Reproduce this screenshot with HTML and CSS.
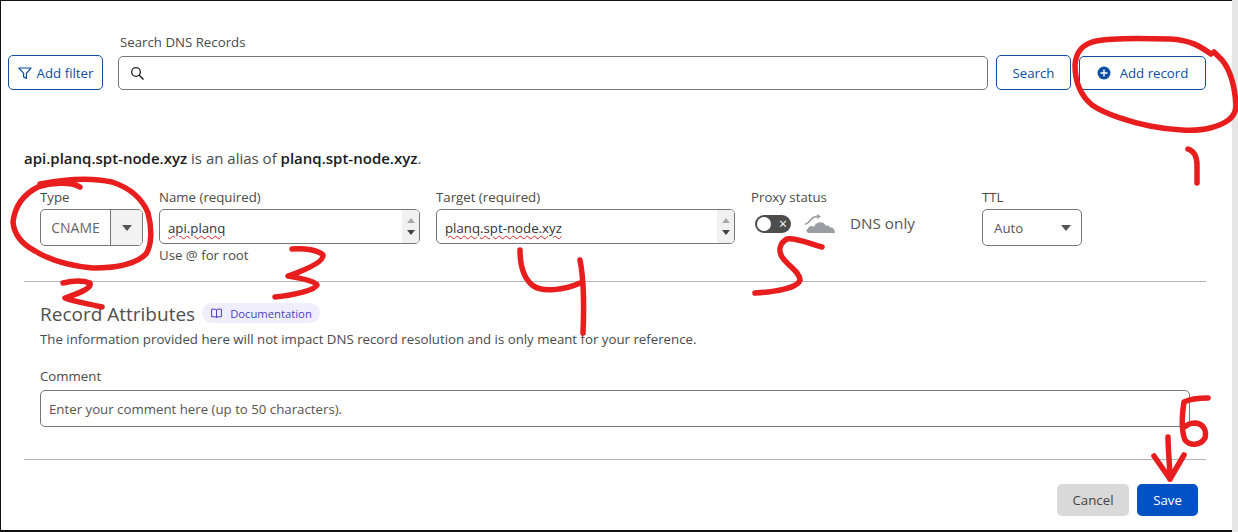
FILE: index.html
```html
<!DOCTYPE html>
<html lang="en">
<head>
  <meta charset="UTF-8" />
  <title>DNS Records</title>
  <link rel="stylesheet" href="styles.css">
</head>
<body>
  <div class="page">
    <div class="search-row">
      <button class="btn btn-outline btn-filter">
        <svg width="14" height="14" viewBox="0 0 14 14"><path d="M1 2h12L8.400 7.400v5L5.600 11V7.400z" fill="none" stroke="#0b4ea2" stroke-width="1.200" stroke-linejoin="round"/></svg>
        Add filter
      </button>
      <div class="search-field">
        <label class="label">Search DNS Records</label>
        <div class="search-box">
          <svg width="15" height="15" viewBox="0 0 15 15"><circle cx="6" cy="6" r="4.300" fill="none" stroke="#222" stroke-width="1.300"/><path d="M9.200 9.200L13.500 13.500" stroke="#222" stroke-width="1.500"/></svg>
        </div>
      </div>
      <button class="btn btn-outline btn-search">Search</button>
      <button class="btn btn-outline btn-add">
        <svg width="14" height="14" viewBox="0 0 14 14"><circle cx="7" cy="7" r="6.500" fill="#0b4ea2"/><path d="M7 3.500v7M3.500 7h7" stroke="#fff" stroke-width="1.400"/></svg>
        Add record
      </button>
    </div>

    <p class="alias"><strong>api.planq.spt-node.xyz</strong> is an alias of <strong>planq.spt-node.xyz</strong>.</p>

    <div class="record-row">
      <div class="col col-type">
        <label class="label">Type</label>
        <div class="select">
          <span class="select-value">CNAME</span>
          <span class="select-arrow"><i class="caret"></i></span>
        </div>
      </div>
      <div class="col col-name">
        <label class="label">Name (required)</label>
        <div class="text-box">
          <span class="typed">api.planq</span>
          <span class="spinner"><i class="up"></i><i class="down"></i></span>
        </div>
        <span class="hint">Use @ for root</span>
      </div>
      <div class="col col-target">
        <label class="label">Target (required)</label>
        <div class="text-box">
          <span class="typed">planq.spt-node.xyz</span>
          <span class="spinner"><i class="up"></i><i class="down"></i></span>
        </div>
      </div>
      <div class="col col-proxy">
        <label class="label">Proxy status</label>
        <div class="proxy">
          <span class="toggle"><i class="knob"></i><span class="toggle-x">×</span></span>
          <svg class="cloud" width="32" height="22" viewBox="0 0 32 22">
            <path d="M1 11.500C4 10.500 5.500 8.500 7 6.500C8.500 4.500 10 3.500 13 3.500" fill="none" stroke="#9a9ea2" stroke-width="1.600"/>
            <path d="M13 1l4 2.500-4 2.500z" fill="#9a9ea2"/>
            <path d="M5 20c-2.500 0-3.500-3.500-1-4.500 1-3 4.500-3 6-1.500 1.500-5 9-7 12-1 1-1 3.500-.5 4 1.500 3-.5 5 2 5 5.500z" fill="#9a9ea2"/>
          </svg>
          <span class="proxy-text">DNS only</span>
        </div>
      </div>
      <div class="col col-ttl">
        <label class="label">TTL</label>
        <div class="ttl-select">Auto<i class="caret"></i></div>
      </div>
    </div>

    <hr class="rule rule-first">

    <div class="attributes">
      <div class="attributes-head">
        <h2>Record Attributes</h2>
        <span class="pill">
          <svg width="11" height="11" viewBox="0 0 11 11"><path d="M.6 1.200h3.600c.7 0 1.300.4 1.300 1.100v7.500c0-.6-.6-1-1.300-1H.6zM10.400 1.200H6.800c-.7 0-1.300.4-1.300 1.100v7.500c0-.6.600-1 1.300-1h3.600z" fill="none" stroke="#4b3fc4" stroke-width="1"/></svg>
          Documentation
        </span>
      </div>
      <p class="note">The information provided here will not impact DNS record resolution and is only meant for your reference.</p>
      <label class="label label-comment">Comment</label>
      <input class="comment" type="text" placeholder="Enter your comment here (up to 50 characters).">
    </div>

    <hr class="rule rule-second">

    <div class="actions">
      <button class="btn btn-cancel">Cancel</button>
      <button class="btn btn-save">Save</button>
    </div>

    <!-- red pen marks on top of the screenshot -->
    <svg class="pen" width="1238" height="532" viewBox="0 0 1238 532">
      <path d="M1211 54C1200 46 1190 40 1170 39C1140 38 1110 38 1096 41C1082 44 1076 52 1075 65C1075 82 1080 95 1092 105C1105 114 1130 122 1150 126C1170 130 1195 132 1210 128C1225 124 1236 118 1236 105C1235 90 1232 72 1222 60L1214 52"/>
      <path d="M1188 149C1194 151 1197 156 1197 165L1197 183"/>
      <path d="M80 187C70 181 50 183 38 187C24 194 15 205 13 222C14 235 22 244 35 251C50 260 70 266 93 268C115 268 135 265 146 254C152 245 152 228 148 213C142 198 130 188 112 182C90 177 65 179 40 184"/>
      <path d="M63 283C72 281 82 280 90 283C92 288 80 293 65 298C75 302 90 304 102 307"/>
      <path d="M292 249C305 248 318 250 323 255C324 262 305 270 288 276C300 278 315 281 317 285C315 290 295 295 275 297"/>
      <path d="M520 250C520 265 524 278 532 285C542 293 565 290 580 283"/>
      <path d="M580 260C584 280 584 310 583 333"/>
      <path d="M822 247C810 244 795 237 787 239C780 243 778 250 782 257C788 266 800 272 800 280C798 288 775 292 755 293"/>
      <path d="M1208 398C1200 398 1190 399 1184 402C1182 415 1181 430 1185 440C1190 446 1200 446 1205 438C1207 430 1203 424 1196 423C1192 423 1188 424 1186 426"/>
      <path d="M1168 437C1168 450 1170 468 1170 479"/>
      <path d="M1154 456L1170 479L1184 455"/>
    </svg>
  </div>
</body>
</html>
```

FILE: styles.css
```css
/* Global Styling */
* {
  box-sizing: border-box;
}

body {
  margin: 0;
  background: #e6e6e6;
  font-family: "Open Sans", "Noto Sans", Arial, sans-serif;
  font-size: 13.25px;
  color: #4a4a4a;
}

.page {
  position: relative;
  width: 1232px;
  height: 532px;
  overflow: visible;
  background: #fff;
  border-top: 1px solid #111;
  border-left: 1px solid #111;
  border-bottom: 2px solid #111;
}

.pen {
  position: absolute;
  top: -1px;
  left: -1px;
  pointer-events: none;
}

.pen path {
  fill: none;
  stroke: #e81e1e;
  stroke-width: 5.5;
  stroke-linecap: round;
  stroke-linejoin: round;
}

.label {
  display: block;
  line-height: 16px;
  color: #4a4a4a;
}

/* Buttons */
.btn {
  font: inherit;
  border-radius: 5px;
  cursor: pointer;
}

.btn-outline {
  display: flex;
  align-items: center;
  justify-content: center;
  height: 35px;
  background: #fff;
  border: 1px solid #0b4ea2;
  color: #0b4ea2;
}

/* Search Row */
.search-row {
  display: flex;
  align-items: flex-end;
  padding: 33px 0 0 7px;
}

.btn-filter {
  width: 95px;
  gap: 5px;
  padding: 0;
}

.search-field {
  margin-left: 15px;
  width: 870px;
}

.search-field .label {
  margin: 0 0 6px 2px;
}

.search-box {
  display: flex;
  align-items: center;
  height: 34px;
  padding-left: 11px;
  border: 1px solid #767676;
  border-radius: 5px;
}

.btn-search {
  width: 75px;
  margin-left: 8px;
}

.btn-add {
  width: 127px;
  margin-left: 8px;
  gap: 9px;
  height: 34px;
}

.alias {
  margin: 58px 0 0 23px;
  font-size: 15px;
  line-height: 20px;
}

.alias strong {
  font-weight: 600;
  color: #1a1a1a;
}

/* Record Row */
.record-row {
  display: flex;
  margin: 21px 0 0 39px;
  height: 85px;
}

.col .label {
  margin-bottom: 4px;
}

.col-type {
  width: 103px;
}

.col-name {
  width: 261px;
  margin-left: 16px;
}

.col-target {
  width: 299px;
  margin-left: 16px;
}

.col-proxy {
  width: 231px;
  margin-left: 16px;
}

.col-ttl {
  width: 100px;
}

.select {
  display: flex;
  height: 37px;
  border: 1px solid #767676;
  border-radius: 5px;
  overflow: hidden;
}

.select-value {
  flex: 1;
  display: flex;
  align-items: center;
  justify-content: center;
  font-size: 14px;
  color: #666;
}

.select-arrow {
  display: flex;
  align-items: center;
  justify-content: center;
  width: 32px;
  background: #f2f2f2;
  border-left: 1px solid #767676;
}

.caret {
  width: 0;
  height: 0;
  border-left: 5px solid transparent;
  border-right: 5px solid transparent;
  border-top: 6px solid #555;
}

.text-box {
  display: flex;
  align-items: center;
  justify-content: space-between;
  height: 35px;
  padding-left: 8px;
  border: 1px solid #767676;
  border-radius: 5px;
  overflow: hidden;
}

.typed {
  padding-top: 3px;
  color: #333;
  text-decoration: underline wavy #e02020 1px;
  text-underline-offset: 2px;
}

.spinner {
  display: flex;
  flex-direction: column;
  justify-content: space-around;
  align-items: center;
  width: 17px;
  height: 100%;
  padding: 5px 0;
  background: #f1f1f1;
}

.spinner .up {
  border-left: 4px solid transparent;
  border-right: 4px solid transparent;
  border-bottom: 5px solid #a9a9a9;
}

.spinner .down {
  border-left: 4px solid transparent;
  border-right: 4px solid transparent;
  border-top: 5px solid #444;
}

.hint {
  display: block;
  margin-top: 3px;
  line-height: 16px;
}

.proxy {
  display: flex;
  align-items: center;
  height: 30px;
  margin-left: 4px;
}

.toggle {
  position: relative;
  width: 36px;
  height: 18px;
  border-radius: 9px;
  background: #4d4d4d;
}

.knob {
  position: absolute;
  top: 2px;
  left: 2px;
  width: 14px;
  height: 14px;
  border-radius: 50%;
  background: #fff;
}

.toggle-x {
  position: absolute;
  top: 0;
  right: 4px;
  color: #fff;
  font-size: 14px;
  line-height: 17px;
}

.cloud {
  margin-left: 13px;
}

.proxy-text {
  margin: 0 0 2px 14px;
  font-size: 15.25px;
  color: #555;
}

.ttl-select {
  display: flex;
  align-items: center;
  justify-content: space-between;
  height: 37px;
  padding: 0 10px 0 11px;
  border: 1px solid #767676;
  border-radius: 5px;
  color: #555;
}

.rule {
  height: 1px;
  margin: 0;
  margin-left: 23px;
  width: 1182px;
  border: 0;
  background: #b5b5b5;
}

.rule-first {
  margin-top: 7px;
}

/* Record Attributes */
.attributes {
  padding-left: 39px;
}

.attributes-head {
  display: flex;
  align-items: center;
  gap: 7px;
  margin-top: 21px;
  height: 22px;
}

h2 {
  margin: 0;
  font-size: 19px;
  font-weight: 400;
  color: #4f4f4f;
}

.pill {
  display: flex;
  align-items: center;
  gap: 8px;
  height: 20px;
  margin-bottom: 2px;
  padding: 0 8px 0 9px;
  border-radius: 10px;
  background: #f0eefc;
  color: #4b3fc4;
  font-size: 11.25px;
}

.note {
  margin: 5px 0 0;
  line-height: 18px;
}

.label-comment {
  margin-top: 20px;
}

.comment {
  display: block;
  width: 1150px;
  height: 37px;
  margin-top: 6px;
  padding: 0 8px;
  font: inherit;
  border: 1px solid #767676;
  border-radius: 5px;
}

.comment::placeholder {
  color: #555;
  opacity: 1;
}

.rule-second {
  margin-top: 32px;
}

/* Footer Buttons */
.actions {
  display: flex;
  justify-content: flex-end;
  gap: 8px;
  padding: 24px 34px 0 0;
}

.btn-cancel {
  width: 72px;
  height: 32px;
  border: 0;
  background: #d9d9d9;
  color: #444;
}

.btn-save {
  width: 61px;
  height: 32px;
  border: 0;
  background: #0051c3;
  color: #fff;
}
```
